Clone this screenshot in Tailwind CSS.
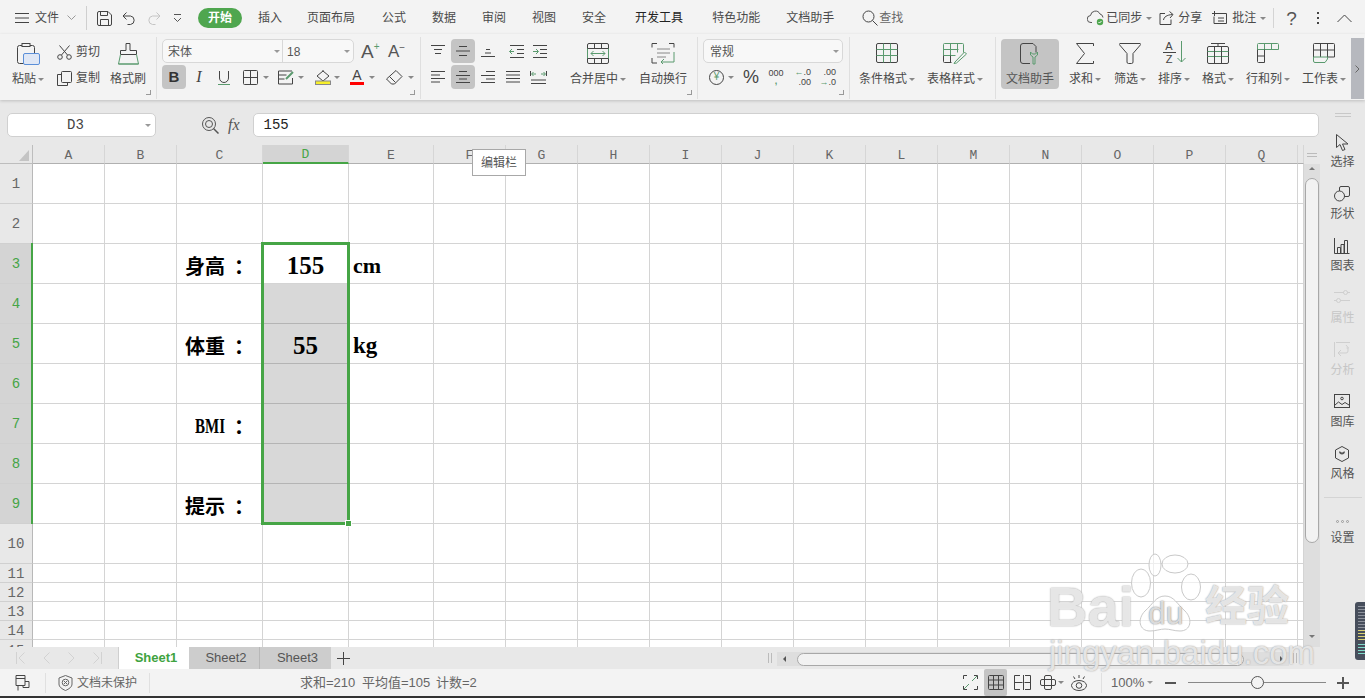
<!DOCTYPE html>
<html lang="zh-CN">
<head>
<meta charset="UTF-8">
<title>WPS 表格</title>
<script src="https://cdn.jsdelivr.net/npm/@tailwindcss/browser@4"></script>
</head>
<body class="w-[1365px] h-[698px] overflow-hidden bg-[#e8e8e8] text-[#4a4a4a] text-xs font-['Liberation_Sans','Noto_Sans_CJK_SC',sans-serif]">
<div class="relative w-[1365px] h-[698px] flex flex-col">

  <!-- TAB ROW -->
  <div class="h-[34px] shrink-0 bg-[#f3f3f3] flex items-center pl-[15px] pt-[2px]">
    <svg width="14" height="12" fill="none" stroke="#444"><path d="M0 1.500h14M0 6h14M0 10.500h14"/></svg>
    <span class="ml-[6px] w-[24px]">文件</span>
    <svg class="ml-[8px]" width="9" height="6" fill="none" stroke="#999"><path d="M.5.5l4 4 4-4"/></svg>
    <i class="ml-[10px] w-px h-[24px] bg-[#cfcfcf]"></i>
    <svg class="ml-[10px]" width="15" height="15" fill="none" stroke="#444"><path d="M2 .5h9l3.500 3.500v9a1.500 1.500 0 0 1-1.500 1.500h-11a1.500 1.500 0 0 1-1.500-1.500v-11a1.500 1.500 0 0 1 1.500-1.500zM3.500 .5v4h7v-4M3.500 14.500v-6h8v6"/></svg>
    <svg class="ml-[10px]" width="14" height="13" fill="none" stroke="#444"><path d="M4.500.5l-3.500 3.500 3.500 3.500M1 4h7.500a4.300 4.300 0 0 1 0 8.500h-3"/></svg>
    <svg class="ml-[11px]" width="14" height="13" fill="none" stroke="#c4c4c4"><path d="M9.500.5l3.500 3.500-3.500 3.500M13 4h-7.500a4.300 4.300 0 0 0 0 8.500h3"/></svg>
    <svg class="ml-[12px]" width="9" height="9" fill="none" stroke="#555"><path d="M1 .5h7M1 4l3.500 3.500 3.500-3.500"/></svg>
    <span class="ml-[16px] w-[44px] h-[20px] rounded-full bg-[#4fa64f] text-white flex items-center justify-center font-bold">开始</span>
    <span class="ml-[16px]">插入</span>
    <span class="ml-[25px]">页面布局</span>
    <span class="ml-[27px]">公式</span>
    <span class="ml-[26px]">数据</span>
    <span class="ml-[26px]">审阅</span>
    <span class="ml-[26px]">视图</span>
    <span class="ml-[26px]">安全</span>
    <span class="ml-[29px] text-[#222]">开发工具</span>
    <span class="ml-[29px]">特色功能</span>
    <span class="ml-[26px]">文档助手</span>
    <svg class="ml-[28px]" width="16" height="16" fill="none" stroke="#444"><circle cx="6.500" cy="6.500" r="5.500"/><path d="M10.500 10.500l5 5"/></svg>
    <span class="ml-[1px] text-[#666]">查找</span>

    <svg class="ml-[184px]" width="18" height="16" fill="none" stroke="#555"><path d="M5 12.500h-1a3.500 3.500 0 0 1-.5-7 5 5 0 0 1 9.500-1.500 4 4 0 0 1 3 3.500"/><circle cx="13" cy="12" r="3.200" fill="#4fa64f" stroke="none"/><path d="M11.500 12l1 1 2-2" stroke="#fff"/></svg>
    <span class="ml-[1px]">已同步</span>
    <i class="ml-[4px] w-0 h-0 border-x-[3px] border-t-[3px] border-x-transparent border-t-[#888]"></i>
    <svg class="ml-[7px]" width="15" height="14" fill="none" stroke="#444"><path d="M6 2.500h-5v11h11v-5M4.500 9c.5-3 3-5 9-5.500M10.500.5l3.500 3-3 3.500"/></svg>
    <span class="ml-[4px]">分享</span>
    <svg class="ml-[10px]" width="15" height="15" fill="none" stroke="#444"><path d="M3 2.500h11.500v10h-12.500v-7M0 2.500h5M2.500 0v5M6 7h6M6 10h6"/></svg>
    <span class="ml-[5px]">批注</span>
    <i class="ml-[4px] w-0 h-0 border-x-[3px] border-t-[3px] border-x-transparent border-t-[#888]"></i>
    <i class="ml-[7px] w-px h-[20px] bg-[#d4d4d4]"></i>
    <span class="ml-[12px] text-[19px] leading-none text-[#555]">?</span>
    <span class="ml-[20px] flex flex-col gap-[3px]"><i class="w-[2px] h-[2px] bg-[#444]"></i><i class="w-[2px] h-[2px] bg-[#444]"></i><i class="w-[2px] h-[2px] bg-[#444]"></i></span>
    <svg class="ml-[18px]" width="15" height="9" fill="none" stroke="#444"><path d="M.5 8l7-7 7 7"/></svg>
  </div>

  <!-- RIBBON -->
  <div class="h-[66px] shrink-0 bg-[#f3f3f3] pt-[3px] flex shadow-[0_1px_3px_rgba(0,0,0,0.18)] z-10">

    <!-- clipboard -->
    <div class="relative w-[157px] h-[62px] border-r border-[#dfdfdf] flex pl-[10px]">
      <div class="flex flex-col items-center w-[36px] h-[50px] pt-[4px] mt-[2px]">
        <svg width="23" height="22" fill="none" stroke="#444"><rect x=".5" y="2.500" width="17" height="18" rx="2"/><rect x="5" y=".5" width="8" height="3" fill="#f3f3f3"/><rect x="6.500" y="10.500" width="16" height="11" rx="1.500" fill="#dfe7f5" stroke="#5b8fd8"/></svg>
        <div class="flex items-center gap-[2px] h-[16px] mt-[6px]">粘贴<i class="w-0 h-0 border-x-[3px] border-t-[3px] border-x-transparent border-t-[#888]"></i></div>
      </div>
      <div class="ml-[11px] pt-[7px] flex flex-col w-[50px]">
        <div class="flex items-center h-[16px]">
          <svg width="15" height="15" fill="none" stroke="#444"><circle cx="3" cy="12" r="2.300"/><circle cx="12" cy="12" r="2.300"/><path d="M4.500 10l8-9.500M10.500 10l-8-9.500"/></svg>
          <span class="ml-[4px]">剪切</span>
        </div>
        <div class="flex items-center h-[16px] mt-[10px]">
          <svg width="15" height="15" fill="none" stroke="#444"><rect x="4.500" y=".5" width="10" height="11" rx="1"/><path d="M4 3.500h-3.500v11h10v-3"/></svg>
          <span class="ml-[4px]">复制</span>
        </div>
      </div>
      <div class="ml-[1px] flex flex-col items-center w-[40px] h-[50px] pt-[4px] mt-[2px]">
        <svg width="21" height="22" fill="none"><path d="M8 .5h4v7h6.500v4h-16v-4h5.500z" stroke="#444"/><path d="M2.500 11.500l-2 9.500h20l-2-9.500M.5 21h20" stroke="#5a9a6e"/></svg>
        <div class="h-[16px] mt-[6px]">格式刷</div>
      </div>
      <i class="absolute right-[5px] bottom-[4px] w-[5px] h-[5px] border-r border-b border-[#999]"></i>
    </div>

    <!-- font -->
    <div class="relative w-[264px] h-[62px] border-r border-[#dfdfdf] pl-[5px] pt-[2px]">
      <div class="flex items-center h-[24px]">
        <div class="w-[192px] h-[24px] rounded-[5px] border border-[#d8d8d8] bg-[#f8f8f8] flex items-center">
          <span class="w-[120px] h-full border-r border-[#d8d8d8] flex items-center pl-[5px] pt-px text-[#555]">宋体<i class="ml-auto mr-[2px] w-0 h-0 border-x-[3px] border-t-[3px] border-x-transparent border-t-[#999]"></i></span>
          <span class="flex-1 flex items-center pl-[4px] pt-px text-[#555]">18<i class="ml-auto mr-[3px] w-0 h-0 border-x-[3px] border-t-[3px] border-x-transparent border-t-[#999]"></i></span>
        </div>
        <span class="ml-[7px] w-[20px] flex items-start text-[19px] leading-none text-[#555]">A<b class="text-[10px] leading-none font-normal text-[#5a9a6e]">+</b></span>
        <span class="ml-[7px] w-[16px] flex items-start text-[17px] leading-none text-[#555]">A<b class="text-[10px] leading-none font-normal text-[#555]">−</b></span>
      </div>
      <div class="flex items-center h-[24px] mt-[2px]">
        <span class="w-[24px] h-[24px] rounded-[4px] bg-[#c4c4c4] flex items-center justify-center font-bold text-[15px] text-[#333]">B</span>
        <span class="ml-[6px] w-[14px] text-center italic text-[16px] font-['Liberation_Serif'] text-[#444]">I</span>
        <svg class="ml-[11px]" width="14" height="15" fill="none"><path d="M2.500 1v7a4.500 4.500 0 0 0 9 0v-7" stroke="#444"/><path d="M1 14.500h12" stroke="#5a9a6e"/></svg>
        <svg class="ml-[12px]" width="16" height="15" fill="none" stroke="#444"><rect x=".5" y=".5" width="14" height="14" rx="1"/><path d="M7.500 .5v14M.5 7.500h14"/></svg>
        <i class="ml-[4px] w-0 h-0 border-x-[3px] border-t-[3px] border-x-transparent border-t-[#888]"></i>
        <svg class="ml-[9px]" width="16" height="15" fill="none"><path d="M14 1h-13.500v13h14v-6M.5 5h8M.5 9h6" stroke="#444"/><path d="M8 9l7-7" stroke="#5a9a6e" stroke-width="2"/></svg>
        <i class="ml-[4px] w-0 h-0 border-x-[3px] border-t-[3px] border-x-transparent border-t-[#888]"></i>
        <svg class="ml-[11px]" width="16" height="15" fill="none"><path d="M8 1l6 5-6 5-6-5zM8 1v-1" stroke="#444"/><rect x=".5" y="11" width="15" height="3.500" fill="#f6ee2a" stroke="#888"/></svg>
        <i class="ml-[3px] w-0 h-0 border-x-[3px] border-t-[3px] border-x-transparent border-t-[#888]"></i>
        <span class="ml-[10px] w-[14px] flex flex-col items-center text-[14px] leading-[13px] text-[#444]">A<i class="w-[14px] h-[3px] bg-[#ff0000]"></i></span>
        <i class="ml-[5px] w-0 h-0 border-x-[3px] border-t-[3px] border-x-transparent border-t-[#888]"></i>
        <svg class="ml-[11px]" width="17" height="15" fill="none" stroke="#444"><path d="M10 .5l6 6-7.500 7.500h-3l-5-5zM3.500 6.500l6 6"/></svg>
        <i class="ml-[5px] w-0 h-0 border-x-[3px] border-t-[3px] border-x-transparent border-t-[#888]"></i>
      </div>
      <i class="absolute right-[5px] bottom-[4px] w-[5px] h-[5px] border-r border-b border-[#999]"></i>
    </div>

    <!-- alignment -->
    <div class="relative w-[277px] h-[62px] border-r border-[#dfdfdf] flex">
      <div class="w-[135px] pl-[5px] pt-[2px]">
        <div class="flex h-[24px]">
          <span class="w-[24px] h-[24px] flex items-center justify-center"><svg width="14" height="14" fill="none" stroke="#444"><path d="M0 1.500h14M3 5.500h8M4 9.500h6"/></svg></span>
          <span class="ml-px w-[24px] h-[24px] rounded-[4px] bg-[#c4c4c4] flex items-center justify-center"><svg width="14" height="12" fill="none" stroke="#444"><path d="M3 1.500h8M0 6h14M3 10.500h8"/></svg></span>
          <span class="ml-px w-[24px] h-[24px] flex items-center justify-center"><svg width="14" height="14" fill="none" stroke="#444"><path d="M5 5.500h4M4 9h6M0 12.500h14"/></svg></span>
          <span class="ml-[4px] w-[24px] h-[24px] flex items-center justify-center"><svg width="15" height="13" fill="none"><path d="M1 .5h14M1 12.500h14M8 4.500h7M8 8.500h7" stroke="#444"/><path d="M5 6.500h-4.500M3 4l-2.500 2.500 2.500 2.500" stroke="#5a9a6e"/></svg></span>
          <span class="w-[24px] h-[24px] flex items-center justify-center"><svg width="15" height="13" fill="none"><path d="M0 .5h14M0 12.500h14M7 4.500h7M7 8.500h7" stroke="#444"/><path d="M0 6.500h5M3 4l2.500 2.500-2.500 2.500" stroke="#5a9a6e"/></svg></span>
        </div>
        <div class="flex h-[24px] mt-[2px]">
          <span class="w-[24px] h-[24px] flex items-center justify-center"><svg width="14" height="12" fill="none" stroke="#444"><path d="M0 .5h14M0 4h9M0 7.500h14M0 11h9"/></svg></span>
          <span class="ml-px w-[24px] h-[24px] rounded-[4px] bg-[#c4c4c4] flex items-center justify-center"><svg width="14" height="12" fill="none" stroke="#444"><path d="M3 .5h8M0 4.500h14M3 8h8M0 11.500h14"/></svg></span>
          <span class="ml-px w-[24px] h-[24px] flex items-center justify-center"><svg width="14" height="12" fill="none" stroke="#444"><path d="M5 .5h9M0 4.500h14M5 8h9M0 11.500h14"/></svg></span>
          <span class="ml-px w-[24px] h-[24px] flex items-center justify-center"><svg width="14" height="12" fill="none" stroke="#444"><path d="M0 .5h14M0 4h14M0 7.500h14M0 11h14"/></svg></span>
          <span class="ml-px w-[24px] h-[24px] flex items-center justify-center"><svg width="17" height="13" fill="none"><path d="M.5 0v5M16.500 0v5M1 9h15M1 12.500h15" stroke="#444"/><path d="M2 3h4M3.500 1l-2 2 2 2M11 3h4M13.500 1l2 2-2 2" stroke="#5a9a6e"/></svg></span>
        </div>
      </div>
      <div class="ml-[11px] flex flex-col items-center w-[62px] h-[50px] pt-[4px] mt-[2px]">
        <svg width="22" height="21" fill="none"><rect x=".5" y=".5" width="21" height="20" rx="1.500" stroke="#444"/><path d="M.5 5.500h21M.5 15.500h21M7.500 .5v5M14.500 .5v5M7.500 15.500v5M14.500 15.500v5" stroke="#444"/><path d="M4 10.500h14M6.500 8l-2.500 2.500 2.500 2.500M15.500 8l2.500 2.500-2.500 2.500" stroke="#5a9a6e"/><path d="M.5 5.500v10M21.500 5.500v10" stroke="#5a9a6e"/></svg>
        <div class="flex items-center gap-[2px] h-[16px] mt-[7px]">合并居中<i class="w-0 h-0 border-x-[3px] border-t-[3px] border-x-transparent border-t-[#888]"></i></div>
      </div>
      <div class="ml-[6px] flex flex-col items-center w-[56px] h-[50px] pt-[4px] mt-[2px]">
        <svg width="24" height="21" fill="none"><path d="M6 .5h-5v4M18 .5h5v4M1 15v5h5" stroke="#444"/><path d="M6 6h13M6 10h13M6 14h9" stroke="#888"/><path d="M23 9v10h-13M13 16l-3 3 3 3" stroke="#5a9a6e"/></svg>
        <div class="h-[16px] mt-[7px]">自动换行</div>
      </div>
      <i class="absolute right-[5px] bottom-[4px] w-[5px] h-[5px] border-r border-b border-[#999]"></i>
    </div>

    <!-- number -->
    <div class="relative w-[152px] h-[62px] border-r border-[#dfdfdf] pl-[5px] pt-[2px]">
      <div class="w-[140px] h-[24px] rounded-[5px] border border-[#d8d8d8] bg-[#f8f8f8] flex items-center pl-[6px] pt-px text-[#555]">常规<i class="ml-auto mr-[3px] w-0 h-0 border-x-[3px] border-t-[3px] border-x-transparent border-t-[#999]"></i></div>
      <div class="flex items-center h-[24px] mt-[2px]">
        <span class="ml-[6px] w-[15px] h-[15px] rounded-full border border-[#444] flex items-center justify-center text-[10px] leading-none text-[#5a9a6e]">¥</span>
        <i class="ml-[4px] w-0 h-0 border-x-[3px] border-t-[3px] border-x-transparent border-t-[#888]"></i>
        <span class="ml-[9px] w-[15px] text-[18px] leading-none text-[#444]">%</span>
        <span class="ml-[11px] w-[14px] flex flex-col items-center text-[9px] leading-[8px] text-[#444]">000<b class="text-[#5a9a6e] leading-[8px]">,</b></span>
        <span class="ml-[14px] w-[14px] flex flex-col items-end text-[9px] leading-[10px] text-[#444]"><span><b class="text-[#5a9a6e] font-normal">←</b>.0</span><span>.00</span></span>
        <span class="ml-[11px] w-[14px] flex flex-col items-end text-[9px] leading-[10px] text-[#444]"><span>.00</span><span><b class="text-[#5a9a6e] font-normal">→</b>.0</span></span>
      </div>
      <i class="absolute right-[5px] bottom-[4px] w-[5px] h-[5px] border-r border-b border-[#999]"></i>
    </div>

    <!-- styles -->
    <div class="w-[146px] h-[62px] border-r border-[#dfdfdf] flex pl-[6px]">
      <div class="flex flex-col items-center w-[62px] h-[50px] pt-[4px] mt-[2px]">
        <svg width="22" height="21" fill="none"><rect x=".5" y=".5" width="21" height="19" rx="1.500" stroke="#444"/><path d="M7.500 .5v6h7v-6M.5 6.500h21M7.500 6.500v6h-7M7.500 12.500h14M14.500 6.500v6h-7v7M14.500 12.500v7" stroke="#5a9a6e"/></svg>
        <div class="flex items-center gap-[2px] h-[16px] mt-[7px]">条件格式<i class="w-0 h-0 border-x-[3px] border-t-[3px] border-x-transparent border-t-[#888]"></i></div>
      </div>
      <div class="ml-[6px] flex flex-col items-center w-[62px] h-[50px] pt-[4px] mt-[2px]">
        <svg width="25" height="21" fill="none"><path d="M.5 12.500v-11a1 1 0 0 1 1-1h18a1 1 0 0 1 1 1v8M.5 6.500h15M.5 12.500h12M7.500 .5v12M14.500 .5v9" stroke="#5a9a6e"/><path d="M.5 12.500v6a1 1 0 0 0 1 1h7M7.500 12.500v7" stroke="#444"/><path d="M12 19l-1 1.500 2.500-.5 10-9-2-2z" stroke="#5a9a6e"/></svg>
        <div class="flex items-center gap-[2px] h-[16px] mt-[7px]">表格样式<i class="w-0 h-0 border-x-[3px] border-t-[3px] border-x-transparent border-t-[#888]"></i></div>
      </div>
    </div>

    <!-- tools -->
    <div class="w-[356px] h-[62px] flex pl-[5px]">
      <div class="flex flex-col items-center w-[58px] h-[50px] pt-[4px] mt-[2px] rounded-[4px] bg-[#c4c4c4]">
        <svg width="20" height="22" fill="none"><path d="M10 20.500h-7a2.500 2.500 0 0 1-2.500-2.500v-15a2.500 2.500 0 0 1 2.500-2.500h10l3 3v6" stroke="#444"/><path d="M13 21v-7l-2.500-2v-3l2 2h3l2-2v3l-2.500 2v7z" stroke="#5a9a6e"/></svg>
        <div class="h-[16px] mt-[6px] text-[#555]">文档助手</div>
      </div>
      <div class="ml-[6px] flex flex-col items-center w-[40px] h-[50px] pt-[4px] mt-[2px]">
        <svg width="18" height="21" fill="none" stroke="#444"><path d="M17.500 3v-2.500h-17l8 10-8 10h17v-2.500"/></svg>
        <div class="flex items-center gap-[2px] h-[16px] mt-[7px]">求和<i class="w-0 h-0 border-x-[3px] border-t-[3px] border-x-transparent border-t-[#888]"></i></div>
      </div>
      <div class="ml-[5px] flex flex-col items-center w-[40px] h-[50px] pt-[4px] mt-[2px]">
        <svg width="22" height="21" fill="none" stroke="#444"><path d="M1 .5h20a.8.8 0 0 1 .5 1.300l-7.500 8.700v8.500a1.500 1.500 0 0 1-1.500 1.500h-3a1.500 1.500 0 0 1-1.500-1.500v-8.500l-7.500-8.700a.8.8 0 0 1 .5-1.300z"/></svg>
        <div class="flex items-center gap-[2px] h-[16px] mt-[7px]">筛选<i class="w-0 h-0 border-x-[3px] border-t-[3px] border-x-transparent border-t-[#888]"></i></div>
      </div>
      <div class="ml-[4px] flex flex-col items-center w-[40px] h-[50px] pt-[2px] mt-[2px]">
        <div class="h-[23px] flex items-start">
          <span class="flex flex-col items-center text-[11px] leading-[10px] text-[#444] w-[13px]">A<i class="w-[13px] h-px bg-[#444] my-px"></i>Z</span>
          <svg class="ml-[1px]" width="9" height="22" fill="none" stroke="#5a9a6e"><path d="M4.500 0v21M.5 17l4 4 4-4"/></svg>
        </div>
        <div class="flex items-center gap-[2px] h-[16px] mt-[7px]">排序<i class="w-0 h-0 border-x-[3px] border-t-[3px] border-x-transparent border-t-[#888]"></i></div>
      </div>
      <div class="ml-[4px] flex flex-col items-center w-[40px] h-[50px] pt-[4px] mt-[2px]">
        <svg width="22" height="21" fill="none"><path d="M4 .5h14M11 .5v3" stroke="#444"/><rect x=".5" y="3.500" width="21" height="17" rx="1.500" stroke="#444"/><path d="M.5 8.500h21M.5 13.500h21" stroke="#5a9a6e"/><path d="M7.500 3.500v17M14.500 3.500v17" stroke="#444"/></svg>
        <div class="flex items-center gap-[2px] h-[16px] mt-[7px]">格式<i class="w-0 h-0 border-x-[3px] border-t-[3px] border-x-transparent border-t-[#888]"></i></div>
      </div>
      <div class="ml-[5px] flex flex-col items-center w-[50px] h-[50px] pt-[4px] mt-[2px]">
        <svg width="22" height="20" fill="none"><path d="M.5 6.500v-5a1 1 0 0 1 1-1h19a1 1 0 0 1 1 1v5zM7.500 .5v6M14.500 .5v6" stroke="#5a9a6e"/><path d="M.5 6.500v12a1 1 0 0 0 1 1h6v-13M.5 13h7" stroke="#444"/></svg>
        <div class="flex items-center gap-[2px] h-[16px] mt-[8px]">行和列<i class="w-0 h-0 border-x-[3px] border-t-[3px] border-x-transparent border-t-[#888]"></i></div>
      </div>
      <div class="ml-[6px] flex flex-col items-center w-[50px] h-[50px] pt-[4px] mt-[2px]">
        <svg width="22" height="20" fill="none"><path d="M.5 14v-12.500a1 1 0 0 1 1-1h19a1 1 0 0 1 1 1v12.500h-7M.5 7h21M7.500 .5v13.500M14.500 .5v13.500" stroke="#444"/><path d="M.5 14h14v2l-2.500 3.500h-10a1.500 1.500 0 0 1-1.500-1.500z" stroke="#5a9a6e"/></svg>
        <div class="flex items-center gap-[2px] h-[16px] mt-[8px]">工作表<i class="w-0 h-0 border-x-[3px] border-t-[3px] border-x-transparent border-t-[#888]"></i></div>
      </div>
    </div>

    <div class="w-[13px] h-[61px] mt-[1px] -ml-px bg-[#b6b8be] flex items-center justify-center">
      <svg width="5" height="8" fill="none" stroke="#666"><path d="M.5.5l3.500 3.500-3.500 3.500"/></svg>
    </div>
  </div>

  <!-- MIDDLE -->
  <div class="flex h-[569px] shrink-0">
    <div class="w-[1320px] shrink-0 flex flex-col">

      <!-- formula bar -->
      <div class="h-[45px] shrink-0 pt-[13px] pl-[7px] flex items-start">
        <div class="relative w-[149px] h-[24px] rounded-[5px] border border-[#d0d0d0] bg-white flex items-center justify-center font-['Liberation_Mono'] text-[14px] text-[#444] pr-[12px]">D3<i class="absolute right-[4px] top-[10px] w-0 h-0 border-x-[3px] border-t-[3px] border-x-transparent border-t-[#999]"></i></div>
        <svg class="ml-[46px] mt-[4px]" width="17" height="17" fill="none" stroke="#555"><circle cx="7" cy="7" r="6.500"/><circle cx="7" cy="7" r="3.500"/><path d="M11.500 11.500l5 5" stroke-width="1.500"/></svg>
        <span class="ml-[9px] mt-[3px] italic text-[16px] leading-[18px] font-['Liberation_Serif'] text-[#555]">fx</span>
        <div class="ml-[13px] w-[1066px] h-[24px] rounded-[5px] border border-[#d0d0d0] bg-white flex items-center pl-[10px] font-['Liberation_Mono'] text-[14px] text-[#222]">155</div>
      </div>

      <!-- sheet -->
      <div class="relative flex h-[502px] shrink-0 overflow-hidden">
        <div id="sheet" class="w-[1304px] shrink-0 h-[503px] grid grid-cols-[33px_72px_72px_86px_86px_85px_repeat(12,72px)_6px] grid-rows-[19px_repeat(10,40px)_repeat(4,19px)_8px] bg-white font-['Liberation_Mono']"></div>
        <div class="w-[16px] shrink-0 bg-[#dedede] flex flex-col items-center">
          <div class="w-full h-[19px] bg-[#e8e8e8] flex items-center justify-center"><svg width="10" height="4" fill="none" stroke="#bbb"><path d="M0 .5h10M0 3.500h10"/></svg></div>
          <i class="mt-[3px] w-0 h-0 border-x-[3px] border-b-[3px] border-x-transparent border-b-[#777]"></i>
          <div class="mt-[8px] w-[14px] h-[365px] rounded-full bg-[#f2f2f2] border border-[#a8a8a8]"></div>
          <i class="mt-[92px] w-0 h-0 border-x-[3px] border-t-[3px] border-x-transparent border-t-[#777]"></i>
        </div>

        <!-- selection -->
        <div class="absolute left-[261px] top-[97px] w-[89px] h-[283px] border-[3px] border-[#46a546]"></div>
        <i class="absolute left-[346px] top-[376px] w-[5px] h-[5px] bg-[#46a546] outline outline-white"></i>
        <i class="absolute left-[31px] top-[98px] w-[2px] h-[281px] bg-[#46a546]"></i>

        <!-- tooltip -->
        <div class="absolute left-[472px] top-[4px] w-[54px] h-[27px] bg-white border border-[#a8a8a8] flex items-center justify-center text-[#555]">编辑栏</div>
      </div>

      <!-- sheet tabs -->
      <div class="h-[22px] shrink-0 flex items-center bg-[#e8e8e8]">
        <div class="w-[119px] h-full border-r border-[#cfcfcf] flex items-center pl-[16px] text-[#d0d0d0]">
          <svg width="9" height="12" fill="none" stroke="#d2d2d2"><path d="M.5 0v12M8.500 .5l-5.500 5.500 5.500 5.500"/></svg>
          <svg class="ml-[18px]" width="7" height="12" fill="none" stroke="#d2d2d2"><path d="M6.500 .5l-5.500 5.500 5.500 5.500"/></svg>
          <svg class="ml-[18px]" width="7" height="12" fill="none" stroke="#d2d2d2"><path d="M.5 .5l5.500 5.500-5.500 5.500"/></svg>
          <svg class="ml-[18px]" width="9" height="12" fill="none" stroke="#d2d2d2"><path d="M8.500 0v12M.5 .5l5.500 5.500-5.500 5.500"/></svg>
        </div>
        <div class="w-[70px] h-full bg-white flex items-center justify-center pl-[4px] font-bold text-[13px] text-[#3fa33f]">Sheet1</div>
        <div class="w-[71px] h-full bg-[#cdcdcd] border-r border-[#b8b8b8] flex items-center justify-center pl-[4px] text-[13px] text-[#555]">Sheet2</div>
        <div class="w-[71px] h-full bg-[#cdcdcd] flex items-center justify-center pl-[4px] text-[13px] text-[#555]">Sheet3</div>
        <svg class="ml-[6px]" width="13" height="13" fill="none" stroke="#444"><path d="M6.500 0v13M0 6.500h13"/></svg>
        <svg class="ml-[418px]" width="4" height="10" fill="none" stroke="#bbb"><path d="M.5 0v10M3.500 0v10"/></svg>
        <div class="ml-[5px] w-[512px] h-[14px] mt-[2px] bg-[#dedede] flex items-center pl-[6px]">
          <i class="w-0 h-0 border-y-[3px] border-r-[3px] border-y-transparent border-r-[#555]"></i>
          <div class="ml-[11px] w-[447px] h-[13px] rounded-full bg-[#f2f2f2] border border-[#a8a8a8]"></div>
          <i class="ml-auto mr-[6px] w-0 h-0 border-y-[3px] border-l-[3px] border-y-transparent border-l-[#555]"></i>
        </div>
        <svg class="ml-[4px]" width="4" height="10" fill="none" stroke="#bbb"><path d="M.5 0v10M3.500 0v10"/></svg>
      </div>
    </div>

    <!-- right panel -->
    <div class="w-[45px] shrink-0 flex flex-col items-center text-[#555]">
      <svg class="mt-[13px] mb-[17px]" width="16" height="4" fill="none" stroke="#c8c8c8"><path d="M0 .5h16M0 3.500h16"/></svg>
      <div class="h-[52px] flex flex-col items-center">
        <svg class="h-[20px]" width="13" height="18" fill="none" stroke="#444"><path d="M.5 .5v13l3.500-3 2.500 6 2.500-1-2.500-5.500h5.500z"/></svg>
        <span class="h-[16px] leading-[16px]">选择</span>
      </div>
      <div class="h-[52px] flex flex-col items-center">
        <svg class="h-[20px]" width="16" height="16" fill="none" stroke="#444"><rect x="5.500" y=".5" width="10" height="10" rx="1.500"/><circle cx="5.500" cy="10" r="5" fill="#e8e8e8"/></svg>
        <span class="h-[16px] leading-[16px]">形状</span>
      </div>
      <div class="h-[52px] flex flex-col items-center">
        <svg class="h-[20px]" width="16" height="16" fill="none" stroke="#444"><path d="M.5 0v15.500h15M3.500 15.500v-6h3v6M7 15.500v-9h3v9M10.500 15.500v-13h3v13"/></svg>
        <span class="h-[16px] leading-[16px]">图表</span>
      </div>
      <div class="h-[52px] flex flex-col items-center text-[#c6c6c6]">
        <svg class="h-[20px]" width="16" height="14" fill="none" stroke="#cfcfcf"><path d="M0 2.500h10M13 2.500h3M0 10.500h3M6 10.500h10"/><circle cx="11.500" cy="2.500" r="2"/><circle cx="4.500" cy="10.500" r="2"/></svg>
        <span class="h-[16px] leading-[16px]">属性</span>
      </div>
      <div class="h-[52px] flex flex-col items-center text-[#c6c6c6]">
        <svg class="h-[20px]" width="16" height="15" fill="none" stroke="#cfcfcf"><path d="M.5 0v15M2 .5h14M12 3l2.500 3-2 0M14 6v3a2 2 0 0 1-2 2h-7M7 8l-3 3 3 3"/></svg>
        <span class="h-[16px] leading-[16px]">分析</span>
      </div>
      <div class="h-[52px] flex flex-col items-center">
        <svg class="h-[20px]" width="16" height="14" fill="none" stroke="#444"><rect x=".5" y=".5" width="15" height="13"/><circle cx="8" cy="4.500" r="1.300"/><path d="M1 11l3.500-3 3.500 2.500 3-2 4 2.500"/></svg>
        <span class="h-[16px] leading-[16px]">图库</span>
      </div>
      <div class="h-[52px] flex flex-col items-center">
        <svg class="h-[20px]" width="14" height="16" fill="none" stroke="#444"><path d="M7 .5l6.500 3.500v8l-6.500 3.500-6.500-3.500v-8z"/><path d="M7 11.500v-3c-1.500 0-3-1-3-3 1.500 0 2.500 .5 3 1.500.5-1 1.500-1.500 3-1.500 0 2-1.500 3-3 3" fill="#555" stroke="none"/></svg>
        <span class="h-[16px] leading-[16px]">风格</span>
      </div>
      <i class="w-[38px] h-px bg-[#d4d4d4] -mt-[1px]"></i>
      <div class="mt-[22px] flex gap-[2px]"><i class="w-[3px] h-[3px] rounded-full border border-[#999]"></i><i class="w-[3px] h-[3px] rounded-full border border-[#999]"></i><i class="w-[3px] h-[3px] rounded-full border border-[#999]"></i></div>
      <span class="mt-[7px] h-[16px] leading-[16px]">设置</span>
    </div>
  </div>

  <!-- STATUS BAR -->
  <div class="h-[27px] shrink-0 bg-[#f3f3f3] flex items-center text-[#666]">
    <svg class="ml-[14px]" width="16" height="16" fill="none" stroke="#444"><path d="M2 .5h9v10h-9zM2 3.500h9M4 10.500v5M9 10.500v2h6v-6h-4"/></svg>
    <i class="ml-[15px] w-px h-[20px] bg-[#e0e0e0]"></i>
    <svg class="ml-[12px]" width="15" height="16" fill="none" stroke="#666"><path d="M7.500 .5l6.500 2.500v6c0 3-3 5-6.500 6.500-3.500-1.500-6.500-3.500-6.500-6.500v-6z"/><circle cx="7.500" cy="7.500" r="3.300"/><path d="M6 6l3 3M9 6l-3 3"/></svg>
    <span class="ml-[4px] w-[60px]">文档未保护</span>
    <i class="ml-[12px] w-px h-[20px] bg-[#e0e0e0]"></i>
    <span class="ml-[150px] text-[13px] w-[54px] whitespace-nowrap">求和=210</span>
    <span class="ml-[8px] text-[13px] w-[66px] whitespace-nowrap">平均值=105</span>
    <span class="ml-[8px] text-[13px] w-[40px] whitespace-nowrap">计数=2</span>
    <svg class="ml-[487px]" width="15" height="15" fill="none"><path d="M4 .5h-3.500v3.500M11 .5h3.500v3.500M.5 11v3.500h3.500M14.500 11v3.500h-3.500" stroke="#444"/><path d="M9 6l5-5M6 9l-5 5" stroke="#5a9a6e"/></svg>
    <span class="ml-[6px] w-[23px] h-[27px] bg-[#c4c4c4] rounded-[2px] flex items-center justify-center"><svg width="16" height="15" fill="none" stroke="#444"><rect x=".5" y=".5" width="15" height="14" rx="1"/><path d="M.5 5h15M.5 10h15M5.500 .5v14M10.500 .5v14"/></svg></span>
    <svg class="ml-[7px]" width="17" height="15" fill="none" stroke="#444"><path d="M6 .5h-5.500v14h5.500M11 .5h5.500v14h-5.500M.5 7.500h8M10.500 7.500h6M9.500 0v15"/></svg>
    <svg class="ml-[9px]" width="16" height="15" fill="none" stroke="#444"><rect x="4.500" y=".5" width="7" height="14" rx="1.500"/><rect x=".5" y="4.500" width="15" height="6" rx="1.500"/></svg>
    <i class="ml-[2px] w-0 h-0 border-x-[3px] border-t-[3px] border-x-transparent border-t-[#888]"></i>
    <svg class="ml-[7px]" width="16" height="16" fill="none" stroke="#444"><ellipse cx="8" cy="10.500" rx="7.500" ry="5"/><circle cx="8" cy="10.500" r="2.800"/><path d="M8 0v3M2.500 1.500l1.500 2.500M13.500 1.500l-1.500 2.500"/></svg>
    <i class="ml-[14px] w-px h-[20px] bg-[#e0e0e0]"></i>
    <span class="ml-[9px] text-[13px]">100%</span>
    <i class="ml-[3px] w-0 h-0 border-x-[3px] border-t-[3px] border-x-transparent border-t-[#999]"></i>
    <i class="ml-[12px] w-[11px] h-[2px] bg-[#555]"></i>
    <div class="ml-[12px] w-[138px] h-px bg-[#888] relative">
      <i class="absolute left-[63px] -top-[6px] w-[13px] h-[13px] rounded-full border border-[#555] bg-[#f3f3f3]"></i>
    </div>
    <svg class="ml-[11px]" width="12" height="12" fill="none" stroke="#555" stroke-width="2"><path d="M6 0v12M0 6h12"/></svg>
  </div>
  <div class="h-[2px] shrink-0 bg-[#333]"></div>

  <!-- baidu watermark -->
  <div class="absolute left-[1040px] top-[545px] w-[260px] h-[130px] pointer-events-none">
    <svg class="absolute left-[85px] top-[6px]" width="82" height="90" fill="#fff" fill-opacity=".6" stroke="#c9c9c9"><ellipse cx="16" cy="32" rx="9.500" ry="14"/><ellipse cx="30" cy="14" rx="6" ry="11"/><ellipse cx="50" cy="13" rx="13" ry="9"/><ellipse cx="66" cy="36" rx="9.500" ry="13"/><path d="M40 45c9 0 12 8 20 15 8 8 6 20-5 20-6 0-10-2-15-2s-9 2-15 2c-11 0-13-12-5-20 8-7 11-15 20-15z"/></svg>
    <span class="absolute left-[7px] top-[32px] text-[56px] leading-[60px] font-bold text-white/70 [text-shadow:0_0_1px_#aaa,0_0_2px_#bbb]">Bai</span>
    <span class="absolute left-[108px] top-[50px] text-[32px] leading-[36px] text-white/70 [text-shadow:0_0_1px_#888,0_0_2px_#aaa]">du</span>
    <span class="absolute left-[165px] top-[32px] text-[42px] leading-[60px] font-bold text-white/70 [text-shadow:0_0_1px_#aaa,0_0_2px_#bbb]">经验</span>
    <span class="absolute left-[9px] top-[88px] text-[33px] leading-[40px] text-white/70 [text-shadow:0_0_1px_#aaa,0_0_2px_#bbb]">jingyan.baidu.com</span>
  </div>

  <!-- dock on the right edge -->
  <div class="absolute left-[1355px] top-[602px] w-[10px] h-[58px] rounded-l-[3px] bg-[#474e5c] pl-[3px] py-[4px] flex flex-col justify-between">
    <i class="block h-[22px] bg-[repeating-linear-gradient(to_bottom,#8d929c_0,#8d929c_1px,transparent_1px,transparent_3px)]"></i>
    <i class="block h-[12px] bg-[repeating-linear-gradient(to_bottom,#d8cf72_0,#d8cf72_1px,transparent_1px,transparent_3px)]"></i>
    <i class="block h-[12px] bg-[repeating-linear-gradient(to_bottom,#7fd8c8_0,#7fd8c8_1px,transparent_1px,transparent_3px)]"></i>
  </div>
</div>

<script>
// cell grid, the same as ng-repeat over rows and columns
var letters = ['', 'A','B','C','D','E','F','G','H','I','J','K','L','M','N','O','P','Q',''];
var cjk = "text-[20px] font-bold text-black font-['Noto_Sans_CJK_SC'] justify-end pr-[17px] pt-[5px]";
var serif = "font-bold text-black font-['Liberation_Serif'] pt-[5px]";
var colon = '<span class="relative left-[9px]">：</span>';
var content = {
  C3: ['身高' + colon, cjk], C5: ['体重' + colon, cjk], C9: ['提示' + colon, cjk],
  C7: ['<span class="inline-block font-[\'Liberation_Serif\'] scale-x-75 origin-right">BMI</span>' + colon, cjk],
  D3: ['155', 'text-[25px] justify-center ' + serif],
  D5: ['55', 'text-[25px] justify-center ' + serif],
  E3: ['cm', 'text-[22px] pl-[4px] ' + serif],
  E5: ['kg', 'text-[23px] pl-[4px] ' + serif]
};
var sheet = document.getElementById('sheet');
for (var r = 0; r <= 15; r++) {
  for (var c = 0; c < letters.length; c++) {
    var cell = document.createElement('div');
    var cls = 'flex items-center overflow-hidden border-r border-b border-[#d4d4d4]';
    var selRow = r >= 3 && r <= 9, selCol = c === 4;
    if (r === 0 && c === 0) {
      cls = 'relative bg-[#e8e8e8] border-r border-b border-[#bdbdbd]';
      cell.innerHTML = '<i class="absolute left-[19px] top-[5px] w-[10px] h-[11px] bg-[#c4c4c4] [clip-path:polygon(100%_0,100%_100%,0_100%)]"></i>';
    } else if (r === 0) {
      cls = 'flex items-center justify-center pt-[3px] border-r border-[#d6d6d6] text-[13px] ' +
        (selCol ? 'bg-[#d4d4d4] text-[#46a546] border-b-[2px] border-b-[#46a546]' : 'bg-[#e8e8e8] text-[#666] border-b border-b-[#b0b0b0]');
      cell.textContent = letters[c];
    } else if (c === 0) {
      // row 15 is cut by the tab bar, only the top of its number shows
      cls = 'flex justify-center border-r border-r-[#b8b8b8] border-b border-b-[#d0d0d0] text-[14px] overflow-hidden ' +
        (r === 15 ? 'items-start pt-[2px] ' : 'items-center pt-[2px] ') +
        (selRow ? 'bg-[#d4d4d4] text-[#46a546]' : 'bg-[#e8e8e8] text-[#666]');
      cell.textContent = r;
    } else {
      if (selCol && r >= 4 && r <= 9) cls += ' bg-[#d8d8d8] border-b-[#b4b4b4]';
      var key = letters[c] + r;
      if (content[key]) {
        cls += ' ' + content[key][1];
        cell.innerHTML = content[key][0];
      }
    }
    cell.className = cls;
    sheet.appendChild(cell);
  }
}
</script>
</body>
</html>
